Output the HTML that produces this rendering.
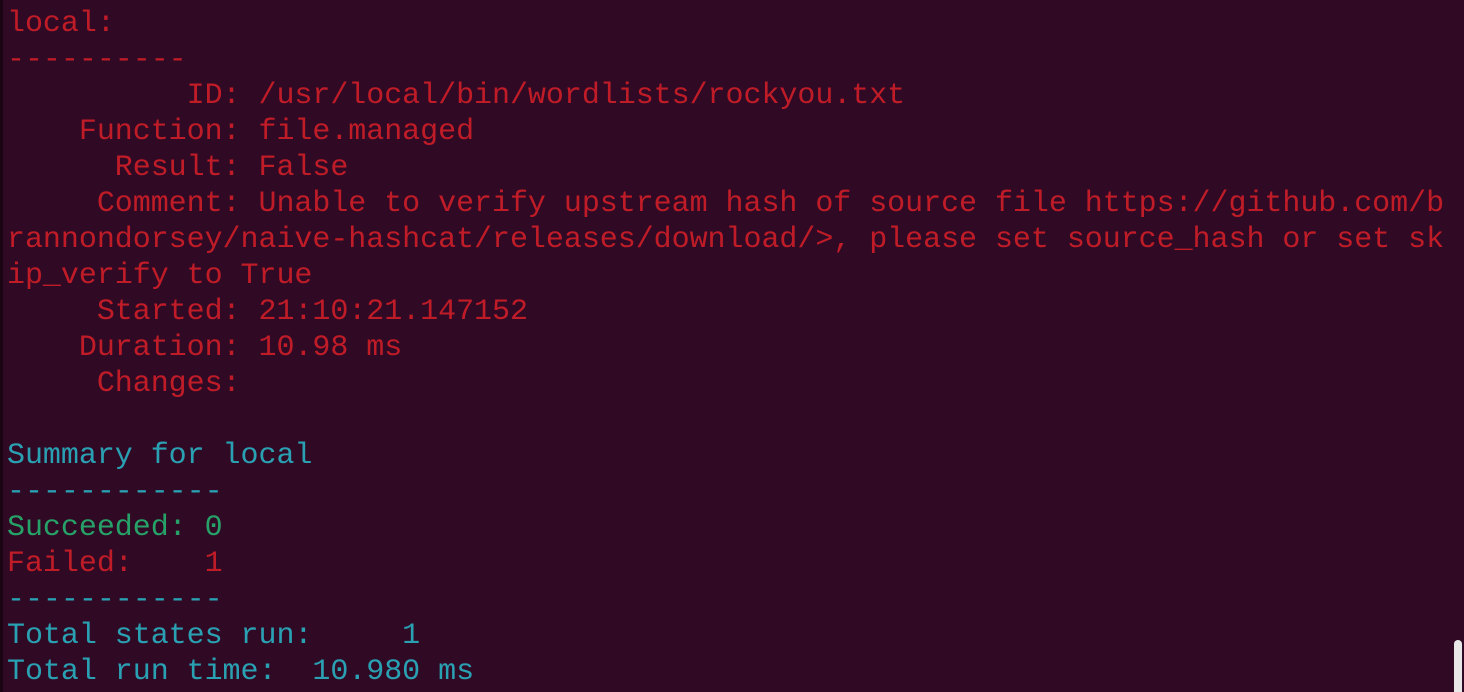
<!DOCTYPE html>
<html><head><style>
html,body{margin:0;padding:0;}
body{width:1464px;height:692px;background:#300a24;overflow:hidden;position:relative;}
.b{position:absolute;left:0;top:0;width:3px;height:692px;background:#1a0414;}
pre{margin:0;position:absolute;left:7px;top:6px;font-family:"Liberation Mono",monospace;font-size:30px;line-height:36px;letter-spacing:-0.04px;color:#c01c28;}
.g{color:#26a269}.c{color:#2aa1b3}
.s{position:absolute;right:2px;top:640px;width:8px;height:52px;background:#e8e8e8;border-radius:4px 4px 0 0;}
</style></head><body><div class="b"></div>
<pre>local:
----------
          ID: /usr/local/bin/wordlists/rockyou.txt
    Function: file.managed
      Result: False
     Comment: Unable to verify upstream hash of source file https://github.com/b
rannondorsey/naive-hashcat/releases/download/>, please set source_hash or set sk
ip_verify to True
     Started: 21:10:21.147152
    Duration: 10.98 ms
     Changes:

<span class="c">Summary for local
------------</span>
<span class="g">Succeeded: 0</span>
Failed:    1
<span class="c">------------
Total states run:     1
Total run time:  10.980 ms</span></pre>
<div class="s"></div>
</body></html>
